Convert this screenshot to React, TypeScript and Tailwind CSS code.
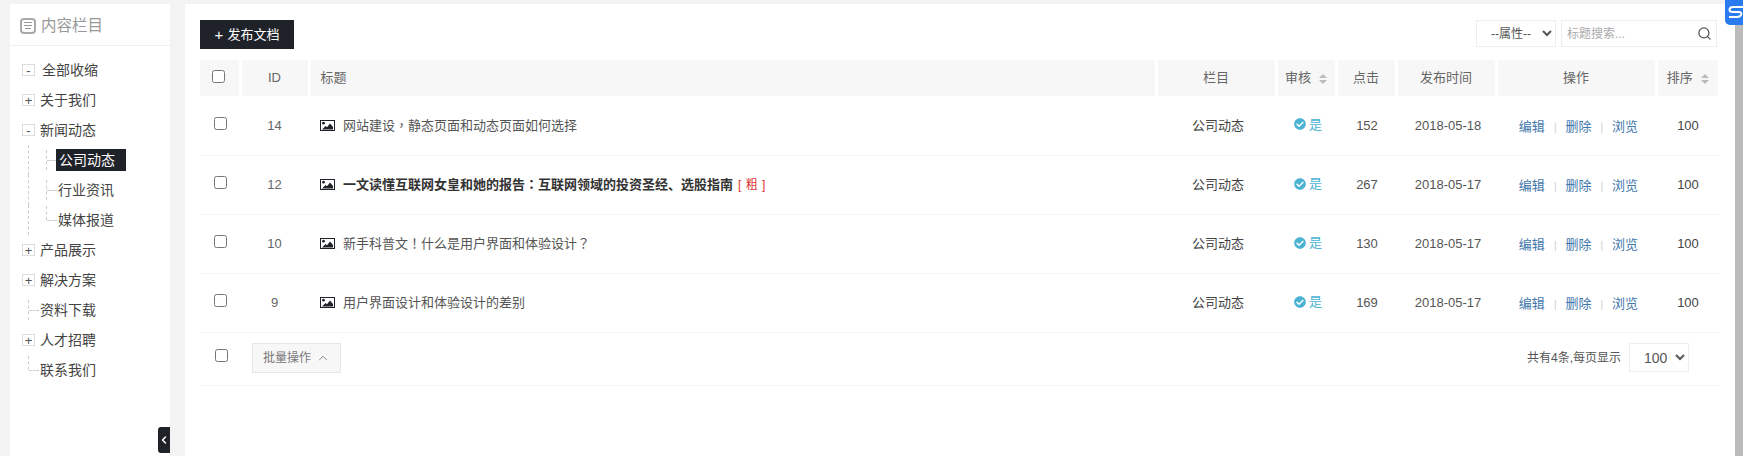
import { FaCheckCircle } from "react-icons/fa";
import { ChevronLeft, ChevronUp, Search } from "lucide-react";

const rows = [
  { id: 14, title: "网站建设，静态页面和动态页面如何选择", clicks: 152, date: "2018-05-18" },
  { id: 12, title: "一文读懂互联网女皇和她的报告：互联网领域的投资圣经、选股指南", clicks: 267, date: "2018-05-17", bold: true },
  { id: 10, title: "新手科普文！什么是用户界面和体验设计？", clicks: 130, date: "2018-05-17" },
  { id: 9, title: "用户界面设计和体验设计的差别", clicks: 169, date: "2018-05-17" },
];

const tree = [
  { label: "全部收缩", box: "-", indent: true },
  { label: "关于我们", box: "+" },
  { label: "新闻动态", box: "-" },
  { label: "公司动态", child: true, active: true },
  { label: "行业资讯", child: true },
  { label: "媒体报道", child: true, last: true },
  { label: "产品展示", box: "+" },
  { label: "解决方案", box: "+" },
  { label: "资料下载" },
  { label: "人才招聘", box: "+" },
  { label: "联系我们", last: true },
];

// - small dashed tree connector
function Connector({ last }: { last?: boolean }) {
  return (
    <span className="flex h-[30px] w-[18px] shrink-0 items-center">
      <span className={`ml-[6px] w-0 border-l border-dashed border-[#ccc] ${last ? "mb-[14px] h-[14px]" : "h-[20px]"}`} />
      <span className="w-[10px] border-t border-dashed border-[#ccc]" />
    </span>
  );
}

function TreeBox({ type }: { type: string }) {
  return (
    <span className="flex h-[12px] w-[13px] shrink-0 items-center justify-center border border-[#ddd] bg-white text-[13px] leading-none text-[#555]">
      {type === "+" ? "+" : "-"}
    </span>
  );
}

function ImageIcon() {
  return (
    <svg width="15" height="11" viewBox="0 0 15 11" className="shrink-0">
      <rect x="0.5" y="0.5" width="14" height="10" fill="#fff" stroke="#1f2229" />
      <circle cx="3.5" cy="3.2" r="1.4" fill="#1f2229" />
      <path d="M2 9.5 L5.5 6 L7 7.2 L10 3.5 L13 7 V9.5 Z" fill="#1f2229" />
    </svg>
  );
}

function Sort() {
  return (
    <span className="ml-2 inline-flex flex-col gap-[2px] align-middle">
      <span className="h-0 w-0 border-x-[4px] border-b-[4px] border-x-transparent border-b-[#bbb]" />
      <span className="h-0 w-0 border-x-[4px] border-t-[4px] border-x-transparent border-t-[#bbb]" />
    </span>
  );
}

// - the reference centres full-width punctuation, the TC font does that
function Title({ text }: { text: string }) {
  return (
    <>
      {text.split(/([，：！？])/).map((part, i) =>
        i % 2 ? (
          <span key={i} className="font-['Noto_Sans_CJK_TC',sans-serif]">
            {part}
          </span>
        ) : (
          part
        ),
      )}
    </>
  );
}

export default function App() {
  return (
    <div className="flex h-[456px] overflow-hidden bg-[#f3f3f4] pt-[4px] pl-[10px] font-['Liberation_Sans','Noto_Sans_CJK_SC',sans-serif] text-[13px] text-[#444]">
      {/* Sidebar */}
      <aside className="relative w-[160px] shrink-0 bg-white">
        <div className="flex h-[42px] items-center gap-[5px] border-b border-[#eee] pt-[2px] pl-[10px] text-[15.5px] text-[#999]">
          <span className="flex h-[16px] w-[16px] flex-col items-center justify-center gap-[2px] rounded-[4px] border-2 border-[#aaa]">
            <span className="h-px w-[8px] bg-[#999]" />
            <span className="h-px w-[8px] bg-[#999]" />
            <span className="h-px w-[6px] bg-[#999]" />
          </span>
          内容栏目
        </div>
        <ul className="pt-[9px] pl-[12px] text-[14px] text-[#444]">
          {tree.map((item) => (
            <li key={item.label} className="flex h-[30px] items-center">
              {item.child && (
                <span className="flex h-[30px] w-[18px] shrink-0">
                  <span className="ml-[6px] h-full border-l border-dashed border-[#ccc]" />
                </span>
              )}
              {item.child && <Connector last={item.last} />}
              {item.box ? <TreeBox type={item.box} /> : !item.child && <Connector last={item.last} />}
              {item.active ? (
                <span className="ml-[-2px] w-[70px] bg-[#1f2229] pl-[3px] leading-[22px] text-white">{item.label}</span>
              ) : (
                <span className={item.child || !item.box ? "" : item.indent ? "ml-[7px]" : "ml-[5px]"}>
                  {item.label}
                </span>
              )}
            </li>
          ))}
        </ul>
        <button className="absolute right-0 bottom-[3px] flex h-[26px] w-[12px] items-center justify-center rounded-l-[3px] bg-[#1f2229] text-white">
          <ChevronLeft size={14} strokeWidth={3} />
        </button>
      </aside>

      {/* Main */}
      <main className="ml-[15px] w-[1550px] shrink-0 bg-white pt-[16px] pl-[15px] pr-[15px]">
        <div className="flex h-[40px] items-start justify-between">
          <button className="flex h-[29px] w-[94px] items-center justify-center gap-[4px] bg-[#1f2229] text-[13px] text-white">
            <span className="text-[15px] leading-none">+</span> 发布文档
          </button>
          <div className="flex items-center gap-[5px] pr-[3px]">
            <select className="h-[27px] w-[80px] border border-[#eee] bg-white pl-[10px] text-[12px] text-[#555]">
              <option>--属性--</option>
            </select>
            <div className="flex h-[27px] w-[156px] items-center justify-between border border-[#eee] pr-[4px] pl-[5px] text-[12px] text-[#aaa]">
              标题搜索...
              <Search size={15} className="text-[#555]" />
            </div>
          </div>
        </div>

        <table className="w-[1520px] table-fixed border-collapse">
          <colgroup>
            <col className="w-[40px]" />
            <col className="w-[69px]" />
            <col className="w-[847px]" />
            <col className="w-[120px]" />
            <col className="w-[60px]" />
            <col className="w-[60px]" />
            <col className="w-[100px]" />
            <col className="w-[160px]" />
            <col className="w-[64px]" />
          </colgroup>
          <thead>
            <tr className="h-[36px] text-[13px] text-[#666] [&>th]:border-r-[3px] [&>th]:border-white [&>th]:bg-[#f7f7f7] [&>th]:font-normal">
              <th>
                <input type="checkbox" className="block translate-x-[12px] -translate-y-[2px]" />
              </th>
              <th>ID</th>
              <th className="pl-[10px] text-left">标题</th>
              <th>栏目</th>
              <th>审核<Sort /></th>
              <th>点击</th>
              <th>发布时间</th>
              <th>操作</th>
              <th className="!border-r-[4px]">排序<Sort /></th>
            </tr>
          </thead>
          <tbody>
            {rows.map((row) => (
              <tr key={row.id} className="h-[59px] border-b border-[#f5f5f5] text-center">
                <td>
                  <input type="checkbox" className="block translate-x-[14px] -translate-y-[2px]" />
                </td>
                <td className="text-[#666]">{row.id}</td>
                <td className="pl-[11px] text-left">
                  <div className="flex items-center gap-[8px]">
                    <ImageIcon />
                    <span className={row.bold ? "font-bold text-[#333]" : "text-[#555]"}>
                      <Title text={row.title} />
                    </span>
                    {row.bold && <span className="ml-[-3px] text-[12px] tracking-[0.5px] text-[#d33]">[ 粗 ]</span>}
                  </div>
                </td>
                <td className="pl-[4px] text-[#444]">公司动态</td>
                <td className="pl-[4px]">
                  <span className="inline-flex items-center gap-[3px] text-[#4ab2d2]">
                    <FaCheckCircle size={12} />是
                  </span>
                </td>
                <td className="pl-[2px] text-[#555]">{row.clicks}</td>
                <td className="pl-[4px] text-[#555]">{row.date}</td>
                <td className="pl-[5px] text-[#3f77ab]">
                  <span className="relative top-[1px]">
                    编辑<span className="mx-[9px] text-[10px] text-[#ccc]">|</span>删除
                    <span className="mx-[9px] text-[10px] text-[#ccc]">|</span>浏览
                  </span>
                </td>
                <td className="text-[#444]">100</td>
              </tr>
            ))}
          </tbody>
        </table>

        <div className="flex h-[53px] items-center justify-between border-b border-[#f5f5f5] pb-[2px]">
          <div className="flex items-center">
            <input type="checkbox" className="ml-[15px] -translate-y-[2px]" />
            <button className="ml-[24px] flex h-[30px] w-[89px] items-center justify-center gap-[5px] border border-[#e6e6e6] bg-[#f7f7f7] text-[12px] text-[#777]">
              批量操作
              <ChevronUp size={14} strokeWidth={1.5} />
            </button>
          </div>
          <div className="flex items-center gap-[8px] pr-[31px] text-[12px] text-[#555]">
            共有4条,每页显示
            <select className="h-[29px] w-[60px] border border-[#eee] bg-white pl-[10px] text-[14px] text-[#555]">
              <option>100</option>
            </select>
          </div>
        </div>
      </main>

      {/* Scrollbar strip and floating badge */}
      <div className="w-[8px] shrink-0 bg-[#bbb]" />
      <div className="absolute top-0 right-0 h-[25px] w-[18px] overflow-hidden rounded-bl-[5px] bg-[#2b7bf0]">
        <svg width="18" height="25" viewBox="0 0 18 25" fill="none" stroke="#fff" strokeWidth="2">
          <path d="M18 7 H8 Q4.5 7 4.5 10 Q4.5 12 8 12 H14 Q17 12 16 15 Q15 17 12 17 H4" />
        </svg>
      </div>
    </div>
  );
}
